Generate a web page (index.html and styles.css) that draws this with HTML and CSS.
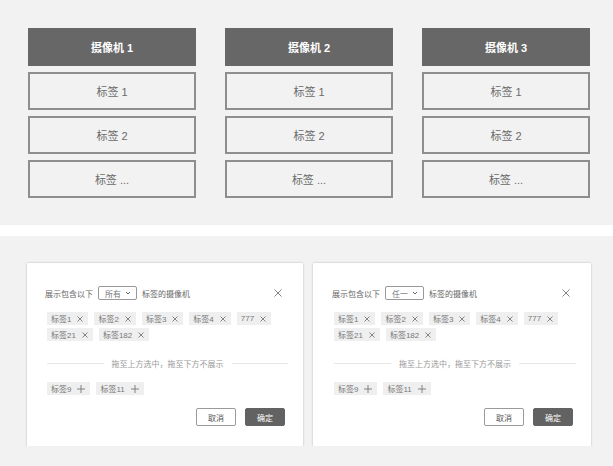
FILE: index.html
```html
<!DOCTYPE html>
<html lang="zh">
<head>
  <meta charset="UTF-8">
  <meta name="viewport" content="width=device-width, initial-scale=1.0">
  <title>摄像机标签筛选</title>
  <link rel="stylesheet" href="styles.css">
</head>
<body>
  <div class="cameras">
    <div class="camera">
      <div class="camera-head">摄像机 1</div>
      <div class="camera-tag">标签 1</div>
      <div class="camera-tag">标签 2</div>
      <div class="camera-tag">标签 ...</div>
    </div>
    <div class="camera">
      <div class="camera-head">摄像机 2</div>
      <div class="camera-tag">标签 1</div>
      <div class="camera-tag">标签 2</div>
      <div class="camera-tag">标签 ...</div>
    </div>
    <div class="camera">
      <div class="camera-head">摄像机 3</div>
      <div class="camera-tag">标签 1</div>
      <div class="camera-tag">标签 2</div>
      <div class="camera-tag">标签 ...</div>
    </div>
  </div>

  <div class="band"></div>

  <div class="dialogs">
    <div class="dialog">
      <div class="dlg-head">
        <span>展示包含以下</span>
        <span class="select">所有 <svg viewBox="0 0 6 4" width="6" height="4"><path d="M1 1l2 2 2-2" fill="none" stroke="#666" stroke-width="1"/></svg></span>
        <span>标签的摄像机</span>
        <svg class="close" viewBox="0 0 8 8" width="8" height="8"><path d="M0.5 0.5l7 7M7.5 0.5l-7 7" stroke="#777" stroke-width="0.9"/></svg>
      </div>
      <div class="tags">
        <span class="tag">标签1 <svg class="x" viewBox="0 0 6 6" width="6" height="6"><path d="M0.5 0.5l5 5M5.5 0.5l-5 5"/></svg></span>
        <span class="tag">标签2 <svg class="x" viewBox="0 0 6 6" width="6" height="6"><path d="M0.5 0.5l5 5M5.5 0.5l-5 5"/></svg></span>
        <span class="tag">标签3 <svg class="x" viewBox="0 0 6 6" width="6" height="6"><path d="M0.5 0.5l5 5M5.5 0.5l-5 5"/></svg></span>
        <span class="tag">标签4 <svg class="x" viewBox="0 0 6 6" width="6" height="6"><path d="M0.5 0.5l5 5M5.5 0.5l-5 5"/></svg></span>
        <span class="tag">777 <svg class="x" viewBox="0 0 6 6" width="6" height="6"><path d="M0.5 0.5l5 5M5.5 0.5l-5 5"/></svg></span>
        <span class="tag">标签21 <svg class="x" viewBox="0 0 6 6" width="6" height="6"><path d="M0.5 0.5l5 5M5.5 0.5l-5 5"/></svg></span>
        <span class="tag">标签182 <svg class="x" viewBox="0 0 6 6" width="6" height="6"><path d="M0.5 0.5l5 5M5.5 0.5l-5 5"/></svg></span>
      </div>
      <div class="divider">拖至上方选中，拖至下方不展示</div>
      <div class="tags spare">
        <span class="tag">标签9 <svg class="x" viewBox="0 0 8 8" width="8" height="8"><path d="M4 0v8M0 4h8"/></svg></span>
        <span class="tag">标签11 <svg class="x" viewBox="0 0 8 8" width="8" height="8"><path d="M4 0v8M0 4h8"/></svg></span>
      </div>
      <div class="dlg-foot">
        <button class="btn">取消</button>
        <button class="btn primary">确定</button>
      </div>
    </div>

    <div class="dialog">
      <div class="dlg-head">
        <span>展示包含以下</span>
        <span class="select">任一 <svg viewBox="0 0 6 4" width="6" height="4"><path d="M1 1l2 2 2-2" fill="none" stroke="#666" stroke-width="1"/></svg></span>
        <span>标签的摄像机</span>
        <svg class="close" viewBox="0 0 8 8" width="8" height="8"><path d="M0.5 0.5l7 7M7.5 0.5l-7 7" stroke="#777" stroke-width="0.9"/></svg>
      </div>
      <div class="tags">
        <span class="tag">标签1 <svg class="x" viewBox="0 0 6 6" width="6" height="6"><path d="M0.5 0.5l5 5M5.5 0.5l-5 5"/></svg></span>
        <span class="tag">标签2 <svg class="x" viewBox="0 0 6 6" width="6" height="6"><path d="M0.5 0.5l5 5M5.5 0.5l-5 5"/></svg></span>
        <span class="tag">标签3 <svg class="x" viewBox="0 0 6 6" width="6" height="6"><path d="M0.5 0.5l5 5M5.5 0.5l-5 5"/></svg></span>
        <span class="tag">标签4 <svg class="x" viewBox="0 0 6 6" width="6" height="6"><path d="M0.5 0.5l5 5M5.5 0.5l-5 5"/></svg></span>
        <span class="tag">777 <svg class="x" viewBox="0 0 6 6" width="6" height="6"><path d="M0.5 0.5l5 5M5.5 0.5l-5 5"/></svg></span>
        <span class="tag">标签21 <svg class="x" viewBox="0 0 6 6" width="6" height="6"><path d="M0.5 0.5l5 5M5.5 0.5l-5 5"/></svg></span>
        <span class="tag">标签182 <svg class="x" viewBox="0 0 6 6" width="6" height="6"><path d="M0.5 0.5l5 5M5.5 0.5l-5 5"/></svg></span>
      </div>
      <div class="divider">拖至上方选中，拖至下方不展示</div>
      <div class="tags spare">
        <span class="tag">标签9 <svg class="x" viewBox="0 0 8 8" width="8" height="8"><path d="M4 0v8M0 4h8"/></svg></span>
        <span class="tag">标签11 <svg class="x" viewBox="0 0 8 8" width="8" height="8"><path d="M4 0v8M0 4h8"/></svg></span>
      </div>
      <div class="dlg-foot">
        <button class="btn">取消</button>
        <button class="btn primary">确定</button>
      </div>
    </div>
  </div>
</body>
</html>
```

FILE: styles.css
```css
* {
  margin: 0;
  padding: 0;
  box-sizing: border-box;
}

body {
  background-color: #f2f2f2;
  font-family: "Liberation Sans", "Noto Sans CJK SC", sans-serif;
  color: #666;
}

/* camera columns */
.cameras {
  height: 225px;
  padding: 28px 0 0 28px;
  display: flex;
  gap: 29px;
}

.camera {
  width: 168px;
  display: flex;
  flex-direction: column;
  gap: 6px;
}

.camera-head {
  height: 38px;
  background-color: #676767;
  color: #fff;
  font-size: 11px;
  font-weight: bold;
  display: flex;
  align-items: center;
  justify-content: center;
}

.camera-tag {
  height: 38px;
  border: 2px solid #8e8e8e;
  font-size: 11px;
  color: #6a6a6a;
  display: flex;
  align-items: center;
  justify-content: center;
}

.band {
  height: 11px;
  background-color: #fff;
}

/* filter dialogs */
.dialogs {
  padding: 27px 0 0 27px;
  display: flex;
  gap: 10px;
}

.dialog {
  width: 276px;
  height: 183px;
  background-color: #fff;
  box-shadow: 0 0 2px rgba(0, 0, 0, 0.25);
  padding: 23px 15px 20px 18px;
  font-size: 8px;
  color: #666;
}

.dialog + .dialog {
  width: 278px;
  padding-left: 19px;
}

.dlg-head {
  height: 14px;
  display: flex;
  align-items: center;
  gap: 5px;
}

.select {
  width: 39px;
  height: 14px;
  border: 1px solid #999;
  border-radius: 2px;
  padding: 0 5px 0 6px;
  display: flex;
  align-items: center;
  justify-content: space-between;
  color: #777;
}

.close {
  margin-left: auto;
  margin-right: 6px;
}

.tags {
  margin: 12px 0 0 2px;
  display: flex;
  flex-wrap: wrap;
  gap: 3px 6px;
}

.tag {
  height: 13px;
  padding: 0 5px 0 4px;
  background-color: #efefef;
  color: #777;
  display: flex;
  align-items: center;
  gap: 6px;
}

.tag .x {
  fill: none;
  stroke: #777;
  stroke-width: 0.9;
}

.divider {
  margin: 17px 0 0 2px;
  height: 10px;
  display: flex;
  align-items: center;
  gap: 8px;
  color: #999;
}

.divider::before,
.divider::after {
  content: "";
  flex: 1;
  height: 1px;
  background-color: #e6e6e6;
}

.spare {
  margin-top: 14px;
}

.dlg-foot {
  margin-top: 13px;
  display: flex;
  justify-content: flex-end;
  gap: 9px;
  padding-right: 3px;
}

.btn {
  width: 40px;
  height: 18px;
  border: 1px solid #9a9a9a;
  border-radius: 2px;
  background-color: #fff;
  color: #555;
  font-family: inherit;
  font-size: 8px;
}

.btn.primary {
  background-color: #626262;
  border-color: #626262;
  color: #fff;
}
```
